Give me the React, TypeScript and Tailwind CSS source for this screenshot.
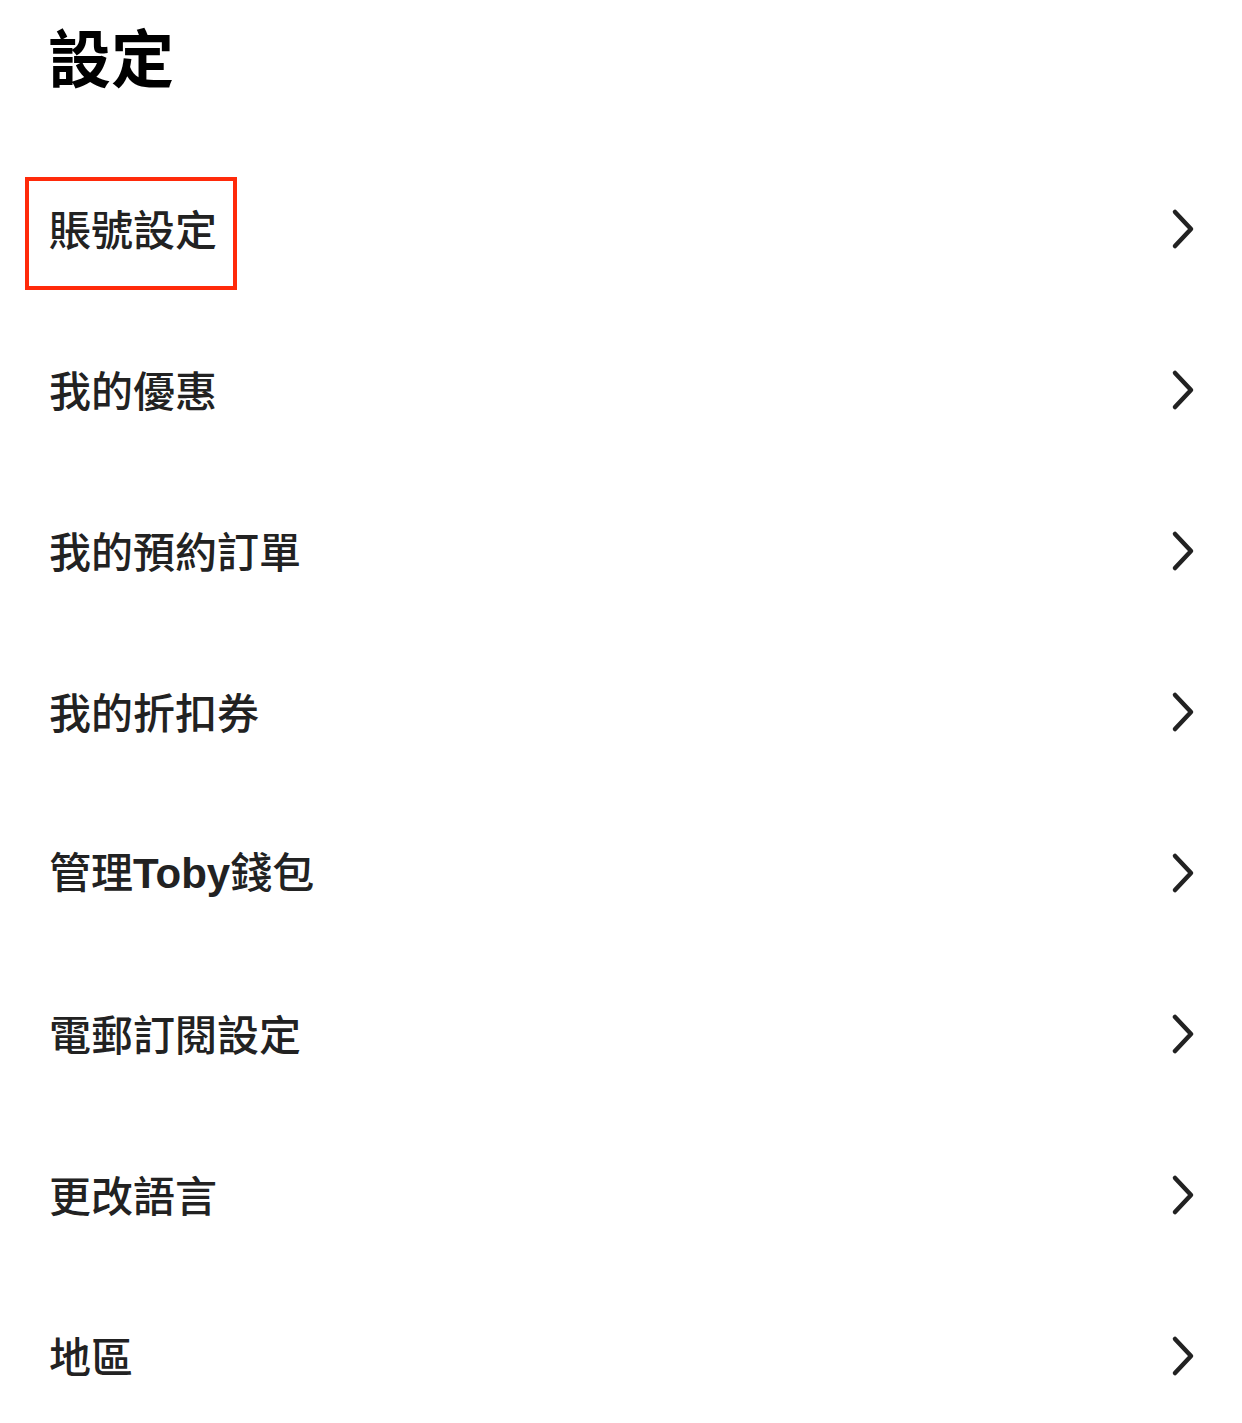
import React from "react";

const items: React.ReactNode[] = [
  "賬號設定",
  "我的優惠",
  "我的預約訂單",
  "我的折扣券",
  <>
    管理
    <span
      className="font-bold"
      style={{ fontFamily: '"Liberation Sans", sans-serif' }}
    >
      Toby
    </span>
    錢包
  </>,
  "電郵訂閱設定",
  "更改語言",
  "地區",
];

const Chevron = () => (
  <svg width="28" height="42" viewBox="0 0 28 42" fill="none">
    <polyline
      points="6,4 22,21 6,38"
      stroke="#222222"
      strokeWidth="4.5"
      strokeLinecap="round"
      strokeLinejoin="round"
    />
  </svg>
);

export default function App() {
  return (
    <div
      className="min-h-screen bg-white text-[#222222]"
      style={{ fontFamily: '"Noto Sans CJK TC", "Noto Sans", sans-serif' }}
    >
      <div className="h-[148px] px-[48px] pt-[15px]">
        <h1 className="text-[63px] font-bold leading-[80px] text-black">設定</h1>
      </div>
      <ul>
        {items.map((label, i) => (
          <li
            key={i}
            className="h-[161px] flex items-center justify-between pl-[49px] pr-[45px]"
          >
            <span className="relative text-[42px] font-medium leading-[58px] -mt-[2px]">
              {label}
              {i === 0 && (
                <span className="absolute -left-[24px] -right-[20px] -top-[22px] -bottom-[33px] border-[4px] border-[#ff2a0a]" />
              )}
            </span>
            <Chevron />
          </li>
        ))}
      </ul>
    </div>
  );
}
